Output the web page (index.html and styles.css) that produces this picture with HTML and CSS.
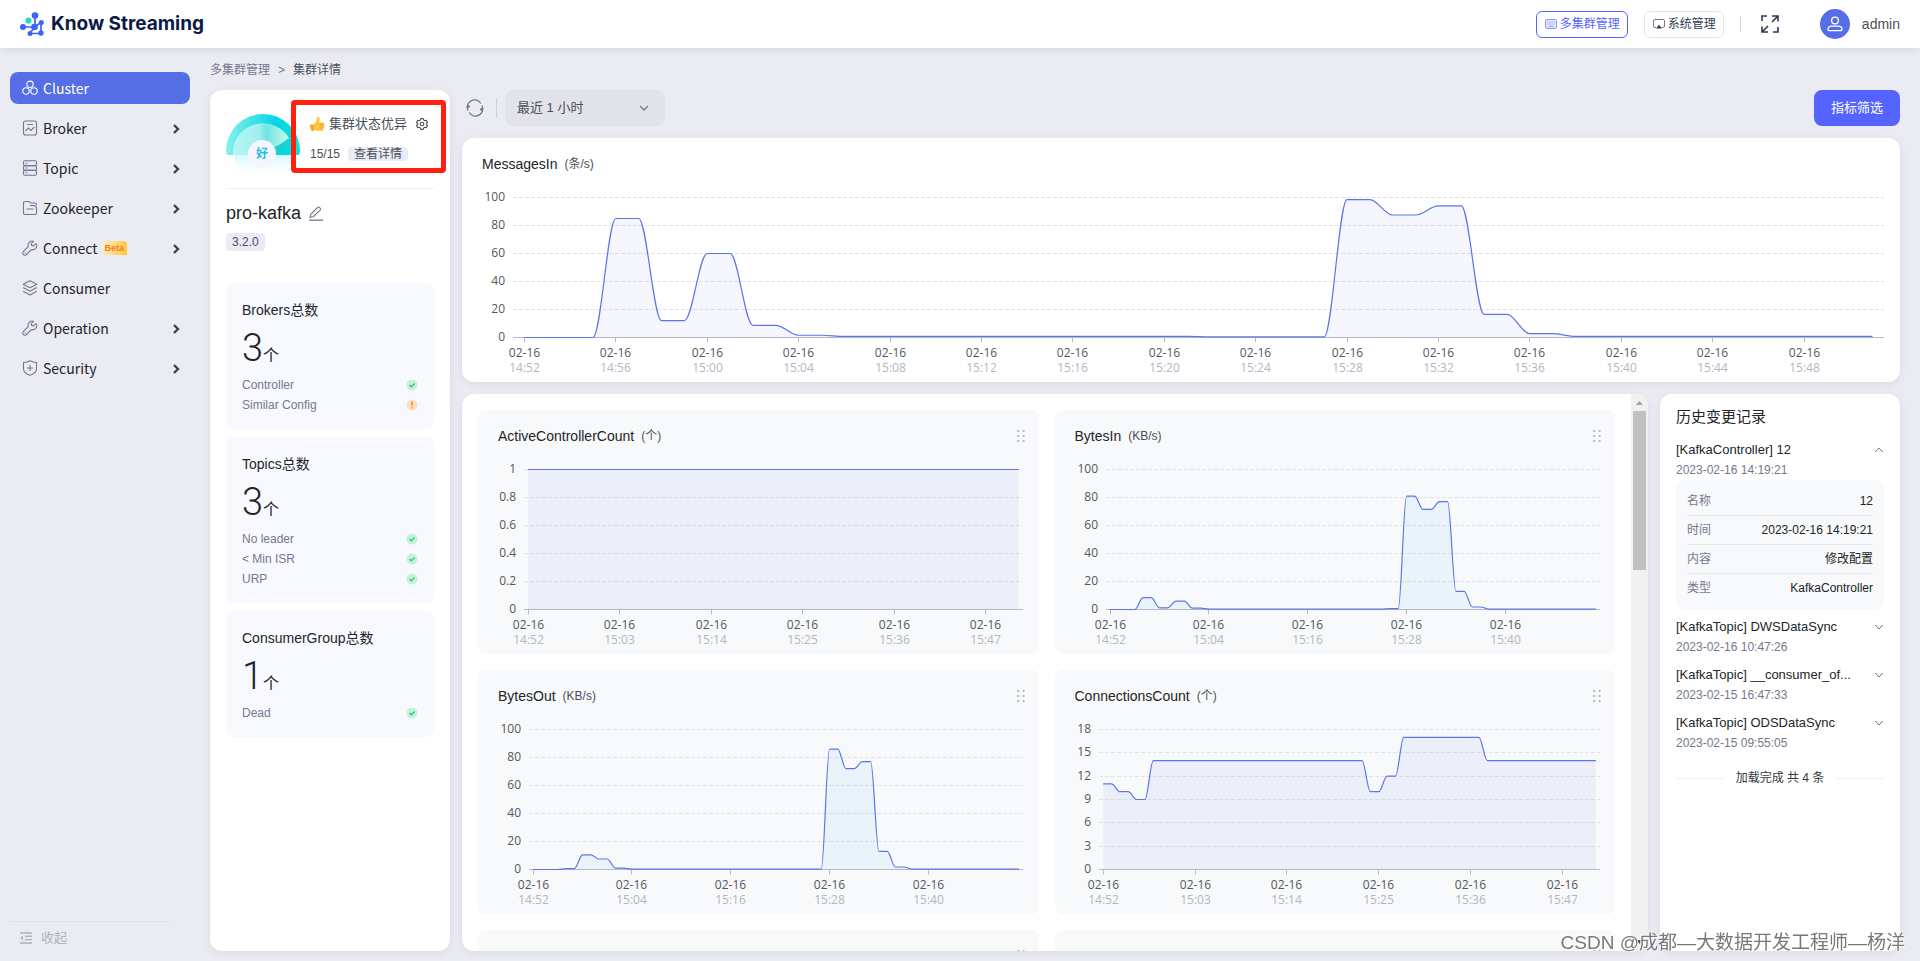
FILE: index.html
```html
<!DOCTYPE html>
<html lang="zh-CN">
<head>
<meta charset="utf-8">
<title>Know Streaming</title>
<link rel="stylesheet" href="styles.css">
</head>
<body>
<svg class="sprite" aria-hidden="true">
  <symbol id="i-chev" viewBox="0 0 8 12"><path d="M2 2l4 4-4 4" fill="none" stroke="currentColor" stroke-width="2.4"/></symbol>
  <symbol id="i-down" viewBox="0 0 10 10"><path d="M1.2 3l3.8 4 3.8-4" fill="none" stroke="currentColor"/></symbol>
  <symbol id="i-up" viewBox="0 0 10 10"><path d="M1.2 7L5 3l3.8 4" fill="none" stroke="currentColor"/></symbol>
  <symbol id="i-ok" viewBox="0 0 12 12"><circle cx="6" cy="6" r="5.5" fill="#c3f3d6"/><path d="M3.5 6l1.9 1.8 3.2-3.3" fill="none" stroke="#34c38f" stroke-width="1.3"/></symbol>
  <symbol id="i-warn" viewBox="0 0 12 12"><circle cx="6" cy="6" r="5.5" fill="#ffe1c2"/><path d="M6 2.6v4.2M6 8v1.4" stroke="#f58a1f" stroke-width="1.5"/></symbol>
  <symbol id="i-wrench" viewBox="0 0 16 16"><path d="M13.9 3.6l-2.4 2.3-1.9-.5-.4-1.8 2.3-2.3a4.2 4.2 0 0 0-5.3 5.3L1.4 11.3a2.2 2.2 0 1 0 3.2 3.2l4.8-4.8a4.2 4.2 0 0 0 5.2-5.2z" fill="none" stroke="currentColor" stroke-width="1.1" stroke-linejoin="round"/><circle cx="3.2" cy="12.8" r=".6" fill="currentColor"/></symbol>
  <symbol id="i-drag" viewBox="0 0 8 14"><g fill="#adb0b8"><circle cx="1.2" cy="2" r="1.1"/><circle cx="6.6" cy="2" r="1.1"/><circle cx="1.2" cy="7" r="1.1"/><circle cx="6.6" cy="7" r="1.1"/><circle cx="1.2" cy="12" r="1.1"/><circle cx="6.6" cy="12" r="1.1"/></g></symbol>
</svg>

<header class="topbar">
  <a class="brand" href="#">
    <svg width="24" height="24" viewBox="0 0 24 24"><path d="M15 3.5V15M3 15h11.500M14.500 15L21 10.500M21 10.500V21M10 21.500h11M14.500 15l-4.500 6.500" fill="none" stroke="#3a64f5" stroke-width="1.7"/><g fill="#3a64f5"><circle cx="15" cy="3.500" r="3.300"/><circle cx="3" cy="15" r="3"/><circle cx="14.500" cy="15" r="3.300"/><circle cx="21.300" cy="10.500" r="2.500"/><circle cx="21" cy="21" r="2.700"/><circle cx="10" cy="21.500" r="2.500"/></g><circle cx="8.500" cy="8.500" r="3.700" fill="#fff"/><circle cx="8.500" cy="8.500" r="3.100" fill="#23dcb8"/></svg>
    <span>Know Streaming</span>
  </a>
  <div class="top-actions">
    <button class="pill pill-active" type="button"><svg width="12" height="12" viewBox="0 0 12 12"><rect x=".5" y="1.500" width="11" height="9" rx="1.500" fill="#e3e6ff" stroke="#8d96ff"/><path d="M2.500 4h7M2.500 6h7" stroke="#8d96ff" stroke-dasharray="1 1"/><path d="M3.500 8.300h5" stroke="#8d96ff"/></svg>多集群管理</button>
    <button class="pill" type="button"><svg width="12" height="12" viewBox="0 0 12 12"><path d="M3 9.500H2A1.500 1.500 0 0 1 .5 8V3A1.500 1.500 0 0 1 2 1.500h8A1.500 1.500 0 0 1 11.500 3v5A1.500 1.500 0 0 1 10 9.500H9" fill="none" stroke="#74788d"/><path d="M6 6.800l3 3.700H3z" fill="#303a52"/></svg>系统管理</button>
    <span class="rule"></span>
    <button class="icon-btn" type="button" aria-label="全屏"><svg width="18" height="18" viewBox="0 0 18 18"><path d="M1 6V1h5M17 12v5h-5M11 1h6v5.500M17 1l-6 6M7 17H1v-5.500M1 17l6-6" fill="none" stroke="#2f3a52" stroke-width="1.600"/></svg></button>
    <a class="user" href="#"><svg width="30" height="30" viewBox="0 0 30 30"><circle cx="15" cy="15" r="15" fill="#556ee6"/><circle cx="15" cy="11.500" r="3.400" fill="none" stroke="#fff" stroke-width="1.300"/><path d="M8 20.500c0-2.200 1.600-3.400 3.600-3.400h6.800c2 0 3.600 1.200 3.600 3.400 0 .9-.6 1.200-1.400 1.200H9.400c-.8 0-1.400-.3-1.400-1.200z" fill="none" stroke="#fff" stroke-width="1.300"/></svg>admin</a>
  </div>
</header>

<div class="shell">
  <nav class="side">
    <a class="nav active" href="#"><svg width="16" height="16" viewBox="0 0 16 16" fill="none" stroke="currentColor" stroke-width="1.100"><circle cx="8" cy="4.300" r="3.200"/><circle cx="4" cy="11" r="3.200"/><circle cx="12" cy="11" r="3.200"/></svg><span>Cluster</span></a>
    <a class="nav" href="#"><svg width="16" height="16" viewBox="0 0 16 16" fill="none" stroke="currentColor" stroke-width="1.100"><rect x="1.500" y="1" width="13" height="14" rx="2"/><path d="M5 4.500h6M3.500 11l3-3 2.500 2.500L12.500 7"/></svg><span>Broker</span><svg class="chev" width="8" height="12"><use href="#i-chev"/></svg></a>
    <a class="nav" href="#"><svg width="16" height="16" viewBox="0 0 16 16" fill="none" stroke="currentColor" stroke-width="1.100"><rect x="1.500" y=".8" width="13" height="4.800" rx="1.500"/><rect x="1.500" y="5.600" width="13" height="4.800" rx="1.500"/><rect x="1.500" y="10.400" width="13" height="4.800" rx="1.500"/><path d="M3.500 3.200h2M3.500 8h2M3.500 12.800h2"/></svg><span>Topic</span><svg class="chev" width="8" height="12"><use href="#i-chev"/></svg></a>
    <a class="nav" href="#"><svg width="16" height="16" viewBox="0 0 16 16" fill="none" stroke="currentColor" stroke-width="1.100"><path d="M14.500 5.500v-1a1.500 1.500 0 0 0-1.500-1.500H8.500L7 1.500H3A1.500 1.500 0 0 0 1.500 3v10A1.500 1.500 0 0 0 3 14.500h10a1.500 1.500 0 0 0 1.500-1.500V7.500L12.500 5.500H8M4.500 9h7"/></svg><span>Zookeeper</span><svg class="chev" width="8" height="12"><use href="#i-chev"/></svg></a>
    <a class="nav" href="#"><svg width="16" height="16"><use href="#i-wrench"/></svg><span>Connect</span><em class="beta">Beta</em><svg class="chev" width="8" height="12"><use href="#i-chev"/></svg></a>
    <a class="nav" href="#"><svg width="16" height="16" viewBox="0 0 16 16" fill="none" stroke="currentColor" stroke-width="1.100" stroke-linejoin="round"><path d="M8 .8l6.800 3.500L8 7.800 1.200 4.300zM1.200 7.600L8 11.200l6.800-3.600M1.200 11.200L8 14.900l6.800-3.700"/></svg><span>Consumer</span></a>
    <a class="nav" href="#"><svg width="16" height="16"><use href="#i-wrench"/></svg><span>Operation</span><svg class="chev" width="8" height="12"><use href="#i-chev"/></svg></a>
    <a class="nav" href="#"><svg width="16" height="16" viewBox="0 0 16 16" fill="none" stroke="currentColor" stroke-width="1.100"><path d="M8 .8c2 1.200 4.200 1.600 6.500 1.700V9c0 3.500-3.200 5.200-6.500 6.300C4.700 14.200 1.500 12.500 1.500 9V2.500C3.800 2.400 6 2 8 .8zM8 5v6M5 8h6"/></svg><span>Security</span><svg class="chev" width="8" height="12"><use href="#i-chev"/></svg></a>
    <button class="collapse" type="button"><svg width="12" height="12" viewBox="0 0 12 12"><path d="M0 1h12M5 4.300h7M5 7.600h7M0 11h12" stroke="currentColor" stroke-width="1.400"/><path d="M3 3.500v5L0 6z" fill="currentColor"/></svg>收起</button>
  </nav>

  <main class="main">
    <div class="crumbs"><a href="#">多集群管理</a><i>&gt;</i><span>集群详情</span></div>
    <div class="columns">
      <section class="panel overview">
        <div class="health">
          <svg class="gauge" width="76" height="66" viewBox="0 0 76 66">
            <defs>
              <linearGradient id="ga" x1="0" x2="1"><stop offset="0" stop-color="#86f1ea"/><stop offset=".7" stop-color="#00d5e6"/><stop offset="1" stop-color="#12e3d0"/></linearGradient>
              <linearGradient id="gb" x1="0" x2="1"><stop offset="0" stop-color="#b4f7f5"/><stop offset=".45" stop-color="#a3efee"/><stop offset=".6" stop-color="#6fe6e2"/><stop offset="1" stop-color="#c9fbe9"/></linearGradient>
              <linearGradient id="gc" x1="0" x2="0" y1="0" y2="1"><stop offset="0" stop-color="#bff5f5" stop-opacity=".7"/><stop offset="1" stop-color="#fff" stop-opacity="0"/></linearGradient>
            </defs>
            <path d="M8 40h60a30 26 0 0 1-60 0z" fill="url(#gc)"/>
            <path d="M0 37a37 37 0 0 1 74 0q0 4-2 4H2q-2 0-2-4z" fill="url(#ga)"/>
            <path d="M7 41V37a30 29 0 0 1 56-13L46 36v5z" fill="url(#gb)"/>
            <path d="M46 34l18-8-12 15h-6z" fill="#20cfc8"/>
            <circle cx="36" cy="40" r="14" fill="#f4f5ff"/>
            <text class="gauge-text" x="36" y="44" text-anchor="middle">好</text>
          </svg>
          <div class="health-info">
            <div class="health-line"><svg width="15" height="16" viewBox="0 0 15 16"><path d="M0 8.500h4V15H1.500Q0 12 0 8.500z" fill="#f5a623"/><path d="M3.500 8.500C6 7 7 4 7 1.500 7 .3 9.300.5 9.600 2c.3 1.600-.1 3-.6 4.300h4c1.500 0 1.700 1.800.7 2.300.9.500.8 1.800-.1 2.200.6.7.3 1.700-.5 2 .3.900-.2 1.900-1.400 1.900H7c-1.500 0-2.500-.4-3.500-.9z" fill="#ffc43a"/><path d="M9.500 8.600h4M9.500 10.900h3.900M9.500 13h3" stroke="#e8962a" stroke-width=".7"/></svg><span>集群状态优异</span><svg class="gear" width="12" height="12" viewBox="0 0 12 12" fill="none" stroke="#495057" stroke-width="1.100"><path d="M4.800.6h2.400l.5 1.500 1.100.6 1.500-.4 1.200 2.100L10.400 5.500v1l1.100 1.100-1.200 2.100-1.500-.4-1.100.6-.5 1.500H4.800l-.5-1.500-1.100-.6-1.500.4L.5 7.600l1.100-1.100v-1L.5 4.400l1.200-2.100 1.500.4 1.100-.6z" stroke-linejoin="round"/><circle cx="6" cy="6" r="1.800"/></svg></div>
            <div class="score"><span>15/15</span><a class="tag" href="#">查看详情</a></div>
          </div>
          <div class="marker"></div>
        </div>
        <div class="cluster-name"><h1>pro-kafka</h1><svg width="14" height="15" viewBox="0 0 14 15" fill="none" stroke="#74788d" stroke-width="1.100"><path d="M1 11.300l.8-3L8.500 1.500q1-.9 2 0l.6.6q.9 1 0 2L4.300 10.700z"/><path d="M0 14.200h14" stroke-width="1.300"/></svg></div>
        <span class="tag version">3.2.0</span>
        <div class="stats">
          <article class="stat"><h2>Brokers总数</h2><p class="num"><b>3</b>个</p><ul><li>Controller<svg width="12" height="12"><use href="#i-ok"/></svg></li><li>Similar Config<svg width="12" height="12"><use href="#i-warn"/></svg></li></ul></article>
          <article class="stat"><h2>Topics总数</h2><p class="num"><b>3</b>个</p><ul><li>No leader<svg width="12" height="12"><use href="#i-ok"/></svg></li><li>&lt; Min ISR<svg width="12" height="12"><use href="#i-ok"/></svg></li><li>URP<svg width="12" height="12"><use href="#i-ok"/></svg></li></ul></article>
          <article class="stat"><h2>ConsumerGroup总数</h2><p class="num"><b>1</b>个</p><ul><li>Dead<svg width="12" height="12"><use href="#i-ok"/></svg></li></ul></article>
        </div>
      </section>

      <div class="content">
        <div class="toolbar">
          <button class="icon-btn" type="button" aria-label="刷新"><svg width="18" height="18" viewBox="0 0 18 18"><path d="M2 11.500A7.300 7.300 0 0 1 14.800 4.500M16 6.500A7.300 7.300 0 0 1 3.200 13.500" fill="none" stroke="#74788d" stroke-width="1.300"/><path d="M1 5l.6 5 2.800-2.600zM17 13l-.6-5-2.800 2.600z" fill="#74788d"/></svg></button>
          <span class="rule"></span>
          <label class="range"><select aria-label="时间范围"><option>最近 1 小时</option></select><svg width="10" height="10" viewBox="0 0 10 10"><path d="M1 3l4 4 4-4" fill="none" stroke="#74788d" stroke-width="1.400"/></svg></label>
          <button class="primary" type="button">指标筛选</button>
        </div>
        <section class="panel chart-card"><h3>MessagesIn<small>(条/s)</small></h3><div class="chart" data-chart="messagesIn"></div></section>
        <div class="lower">
          <section class="panel metrics">
            <div class="grid">
              <article class="chart-card tile"><h3>ActiveControllerCount<small>(个)</small><svg class="drag" width="8" height="14"><use href="#i-drag"/></svg></h3><div class="chart" data-chart="activeController"></div></article>
              <article class="chart-card tile"><h3>BytesIn<small>(KB/s)</small><svg class="drag" width="8" height="14"><use href="#i-drag"/></svg></h3><div class="chart" data-chart="bytesIn"></div></article>
              <article class="chart-card tile"><h3>BytesOut<small>(KB/s)</small><svg class="drag" width="8" height="14"><use href="#i-drag"/></svg></h3><div class="chart" data-chart="bytesOut"></div></article>
              <article class="chart-card tile"><h3>ConnectionsCount<small>(个)</small><svg class="drag" width="8" height="14"><use href="#i-drag"/></svg></h3><div class="chart" data-chart="connections"></div></article>
              <article class="chart-card tile"><h3><svg class="drag" width="8" height="14"><use href="#i-drag"/></svg></h3></article>
              <article class="chart-card tile"><h3><svg class="drag" width="8" height="14"><use href="#i-drag"/></svg></h3></article>
            </div>
            <div class="scrollbar"><svg width="17" height="17" viewBox="0 0 17 17"><path d="M5 11l3.500-4 3.500 4z" fill="#a3a3a3"/></svg><span class="thumb"></span><svg class="end" width="17" height="17" viewBox="0 0 17 17"><path d="M5 6l3.500 4L12 6z" fill="#505050"/></svg></div>
          </section>
          <aside class="panel history">
            <h2>历史变更记录</h2>
            <div class="event"><button type="button"><span>[KafkaController] 12</span><svg width="10" height="10"><use href="#i-up"/></svg></button><time>2023-02-16 14:19:21</time>
              <dl><div><dt>名称</dt><dd>12</dd></div><div><dt>时间</dt><dd>2023-02-16 14:19:21</dd></div><div><dt>内容</dt><dd>修改配置</dd></div><div><dt>类型</dt><dd>KafkaController</dd></div></dl></div>
            <div class="event"><button type="button"><span>[KafkaTopic] DWSDataSync</span><svg width="10" height="10"><use href="#i-down"/></svg></button><time>2023-02-16 10:47:26</time></div>
            <div class="event"><button type="button"><span>[KafkaTopic] __consumer_of...</span><svg width="10" height="10"><use href="#i-down"/></svg></button><time>2023-02-15 16:47:33</time></div>
            <div class="event"><button type="button"><span>[KafkaTopic] ODSDataSync</span><svg width="10" height="10"><use href="#i-down"/></svg></button><time>2023-02-15 09:55:05</time></div>
            <p class="done">加载完成 共 4 条</p>
          </aside>
        </div>
      </div>
    </div>
  </main>
</div>
<div class="watermark">CSDN @成都—大数据开发工程师—杨洋</div>
<script src="charts.js"></script>
</body>
</html>
```

FILE: styles.css
```css
* { box-sizing: border-box; }
body {
  margin: 0;
  height: 100vh;
  display: flex;
  flex-direction: column;
  overflow: hidden;
  background: #ebebf3;
  color: #212529;
  font: 12px/20px "Liberation Sans", "Noto Sans CJK SC", sans-serif;
}
h1, h2, h3, p, ul, dl, dd { margin: 0; padding: 0; font-weight: 400; }
ul { list-style: none; }
a { color: inherit; text-decoration: none; }
button, select { font: inherit; color: inherit; border: 0; background: none; padding: 0; }
svg { flex: none; display: block; }
.sprite { position: absolute; width: 0; height: 0; }

.topbar {
  position: relative;
  flex: none;
  height: 48px;
  padding: 0 20px;
  display: flex;
  align-items: center;
  justify-content: space-between;
  background: #fff;
  box-shadow: 0 2px 8px rgba(40, 50, 70, .1);
}
.brand { display: flex; align-items: center; gap: 7px; font: 700 19px/24px Inter, sans-serif; color: #0b1a45; }
.top-actions { display: flex; align-items: center; gap: 16px; }
.pill { display: flex; align-items: center; gap: 3px; height: 27px; padding: 0 7px 0 8px; border: 1px solid #e3e5ec; border-radius: 6px; color: #303a52; }
.pill-active { border-color: #5664ff; color: #5664ff; }
.rule { width: 1px; height: 16px; background: #d0d3de; }
.icon-btn { display: flex; }
.top-actions .icon-btn { margin: 0 25px 0 4px; }
.user { display: flex; align-items: center; gap: 12px; font-size: 14px; color: #495057; }

.shell { flex: 1; min-height: 0; display: flex; }
.side { width: 200px; flex: none; padding: 24px 10px 11px; display: flex; flex-direction: column; gap: 8px; }
.nav { display: flex; align-items: center; height: 32px; padding: 0 10px 0 12px; border-radius: 8px; font: 14px/20px "Noto Sans CJK SC", sans-serif; }
.nav > svg:first-child { color: #74788d; margin-right: 5px; }
.nav.active { background: #556ee6; color: #fff; }
.nav.active > svg:first-child { color: #fff; }
.nav .chev { margin: 2px 0 0 auto; color: #39445a; }
.beta { margin-left: 4px; padding: 0 3px; border-radius: 4px 4px 0 4px; background: linear-gradient(100deg, #fff0cf, #ffc338); color: #ee8420; font: 700 9px/14px "Liberation Sans", sans-serif; }
.collapse { margin: auto 20px 0 0; padding: 6px 0 2px 10px; display: flex; align-items: center; gap: 9px; border-top: 1px solid #dfe0e8; font-size: 13px; color: #adb5bd; }

.main { flex: 1; min-width: 0; padding: 12px 20px 10px 10px; display: flex; flex-direction: column; gap: 10px; }
.crumbs { display: flex; gap: 8px; color: #74788d; }
.crumbs i { font-style: normal; }
.crumbs span { color: #495057; }
.columns { flex: 1; min-height: 0; display: flex; gap: 12px; }
.panel { background: #fff; border-radius: 12px; box-shadow: 0 2px 8px rgba(40, 50, 70, .08); }

.overview { width: 240px; flex: none; padding: 0 16px; }
.health { position: relative; height: 99px; padding-top: 24px; display: flex; gap: 8px; border-bottom: 1px solid #eff0f4; }
.gauge-text { font-size: 12px; font-weight: 700; fill: #19c5dc; }
.health-info { display: flex; flex-direction: column; gap: 10px; color: #495057; white-space: nowrap; }
.health-line { display: flex; align-items: center; gap: 4px; font-size: 13px; }
.gear { margin-left: 5px; }
.score { display: flex; align-items: center; gap: 8px; }
.tag { padding: 0 6px; border-radius: 4px; background: #ebebf6; color: #495057; line-height: 14px; }
.marker { position: absolute; left: 65px; top: 10px; width: 155px; height: 73px; border: 5px solid #ff2012; border-radius: 4px; }
.cluster-name { display: flex; align-items: center; gap: 8px; height: 32px; margin-top: 8px; }
.cluster-name h1 { font-size: 18px; }
.version { display: inline-block; margin-top: 4px; line-height: 18px; }
.stats { display: flex; flex-direction: column; gap: 8px; margin-top: 31px; }
.stat { padding: 16px 16px 14px; border-radius: 8px; background: #f8f9ff; }
.stat h2 { font-size: 14px; line-height: 22px; }
.num { height: 54px; line-height: 54px; font-size: 16px; }
.num b { font: 300 38px/54px Roboto, sans-serif; }
.stat li { display: flex; align-items: center; justify-content: space-between; color: #74788d; }

.content { flex: 1; min-width: 0; display: flex; flex-direction: column; gap: 12px; }
.toolbar { display: flex; align-items: center; gap: 8px; height: 36px; padding-left: 4px; }
.toolbar .rule { height: 20px; margin-left: 4px; }
.range { position: relative; width: 160px; display: block; }
.range select { appearance: none; width: 100%; height: 36px; padding: 0 12px; border-radius: 8px; background: #e3e3eb; font-size: 13px; color: #495057; }
.range svg { position: absolute; right: 16px; top: 13px; pointer-events: none; }
.primary { margin-left: auto; height: 36px; padding: 0 17px; border-radius: 8px; background: #5664ff; color: #fff; font-size: 13px; }

.chart-card h3 { display: flex; align-items: center; height: 44px; padding: 8px 14px 0 20px; font-size: 14px; }
.chart-card small { margin-left: 7px; font-size: 12px; color: #495057; }
.drag { margin-left: auto; }
.chart { height: 200px; }
.chart svg { width: 100%; height: 100%; }
.chart text { font: 12px "Open Sans", sans-serif; }
.y-label, .x-date { fill: #53575e; }
.x-time { fill: #b1b7bf; }
.grid-line { stroke: #e1e3e7; stroke-dasharray: 4 2; }
.axis { stroke: #b9bcc3; }
.series { fill: none; stroke: #5b76ea; stroke-width: 1.2; }

.lower { flex: 1; min-height: 0; display: flex; gap: 12px; }
.metrics { flex: 1; min-width: 0; display: flex; overflow: hidden; }
.grid { flex: 1; min-width: 0; padding: 16px; display: grid; grid-template-columns: 1fr 1fr; gap: 16px; align-content: start; }
.tile { min-width: 0; border-radius: 8px; background: #f8f9fb; }
.scrollbar { width: 17px; flex: none; display: flex; flex-direction: column; background: #f1f1f1; }
.thumb { height: 159px; margin: 0 2px; background: #c1c1c1; }
.scrollbar .end { margin-top: auto; }

.history { width: 240px; flex: none; padding: 12px 16px; }
.history h2 { font-size: 15px; line-height: 22px; margin-bottom: 12px; }
.event { margin-bottom: 8px; }
.event button { width: 100%; display: flex; align-items: center; justify-content: space-between; font-size: 13px; color: #212529; }
.event button svg { color: #74788d; }
.event time { display: block; color: #74788d; }
.event dl { padding: 6px 11px 7px; border-radius: 8px; background: #f8f9fb; margin: 0 0 8px; }
.event dl div { display: flex; justify-content: space-between; height: 29px; align-items: center; }
.event dl div + div { border-top: 1px solid #e6e8ec; }
.event dt { color: #74788d; }
.done { display: flex; align-items: center; gap: 12px; margin-top: 15px; color: #343a40; }
.done::before, .done::after { content: ""; flex: 1; height: 1px; background: #eff0f3; }

.watermark {
  position: fixed;
  right: 15px;
  bottom: 5px;
  font-size: 19px;
  line-height: 26px;
  color: #77787c;
  text-shadow: -1px -1px 0 #fff, 1px 1px 0 rgba(255, 255, 255, .8);
}
```

FILE: charts.js
```js
function fill(count, base, runs) {
  var out = new Array(count).fill(base);
  runs.forEach(function (r) {
    for (var i = r[0]; i <= r[1]; i++) out[i] = r[2];
  });
  return out;
}

var charts = {
  messagesIn: {
    left: 51, max: 100, step: 20, every: 4, area: 'rgba(86,100,255,.055)',
    data: fill(60, 0.8, [[0, 3, 0], [4, 5, 85], [6, 7, 12], [8, 9, 60], [10, 11, 8.700], [12, 13, 1.600], [30, 35, 0.400], [36, 37, 98.500], [38, 39, 87.500], [40, 41, 94], [42, 43, 16.500], [44, 45, 2.700]])
  },
  activeController: {
    left: 46, max: 1, step: 0.2, every: 11, area: 'rgba(85,110,230,.07)',
    data: fill(60, 1, [])
  },
  bytesIn: {
    left: 51, max: 100, step: 20, every: 12, area: 'rgba(60,150,240,.07)',
    data: fill(60, 0.3, [[0, 3, 0], [4, 5, 8.500], [6, 7, 1.200], [8, 9, 6], [10, 11, 1], [34, 35, 0.6], [36, 37, 81], [38, 39, 71.500], [40, 41, 77], [42, 43, 13], [44, 45, 1.800]])
  },
  bytesOut: {
    left: 51, max: 100, step: 20, every: 12, area: 'rgba(60,150,240,.07)',
    data: fill(60, 0.3, [[0, 3, 0], [4, 5, 0.6], [6, 7, 10.500], [8, 9, 7.500], [10, 11, 1], [36, 37, 86], [38, 39, 72], [40, 41, 77], [42, 43, 13], [44, 45, 1.800]])
  },
  connections: {
    left: 44, max: 18, step: 3, every: 11, area: 'rgba(85,110,230,.07)',
    data: fill(60, 14, [[0, 1, 11], [2, 3, 10], [4, 5, 9], [32, 33, 10], [34, 35, 12], [36, 45, 17]])
  }
};

function timeAt(i) {
  var m = 14 * 60 + 52 + i;
  return Math.floor(m / 60) + ':' + String(m % 60).padStart(2, '0');
}

function draw(box) {
  var c = charts[box.dataset.chart];
  var w = box.clientWidth, right = w - 16, top = 15.5, h = 140, base = top + h;
  var slot = (right - c.left) / c.data.length;
  var s = '';
  for (var k = 0; k <= Math.round(c.max / c.step); k++) {
    var y = Math.floor(base - h * k * c.step / c.max) + 0.5;
    if (k) s += '<line class="grid-line" x1="' + c.left + '" x2="' + right + '" y1="' + y + '" y2="' + y + '"/>';
    s += '<text class="y-label" text-anchor="end" x="' + (c.left - 8) + '" y="' + (y + 3) + '">' + +(k * c.step).toFixed(1) + '</text>';
  }
  s += '<line class="axis" x1="' + c.left + '" x2="' + right + '" y1="' + base + '" y2="' + base + '"/>';
  var pts = c.data.map(function (v, i) {
    return [c.left + slot * (i + 0.5), base - h * v / c.max];
  });
  var d = 'M' + pts[0].join(' ');
  for (var i = 1; i < pts.length; i++) {
    var a = pts[i - 1], b = pts[i], q = (b[0] - a[0]) * 0.35;
    d += 'C' + [a[0] + q, a[1], b[0] - q, b[1], b[0], b[1]].join(' ');
  }
  for (i = 0; i < pts.length; i += c.every) {
    var x = Math.floor(pts[i][0]) + 0.5;
    s += '<line class="axis" x1="' + x + '" x2="' + x + '" y1="' + base + '" y2="' + (base + 5) + '"/>';
    s += '<text class="x-date" text-anchor="middle" x="' + x + '" y="' + (base + 19.5) + '">02-16</text>';
    s += '<text class="x-time" text-anchor="middle" x="' + x + '" y="' + (base + 34.5) + '">' + timeAt(i) + '</text>';
  }
  s += '<path d="' + d + 'V' + base + 'H' + pts[0][0] + 'Z" fill="' + c.area + '"/>';
  s += '<path class="series" d="' + d + '"/>';
  box.innerHTML = '<svg>' + s + '</svg>';
}

function drawAll() {
  document.querySelectorAll('.chart').forEach(draw);
}
drawAll();
window.addEventListener('resize', drawAll);
```
